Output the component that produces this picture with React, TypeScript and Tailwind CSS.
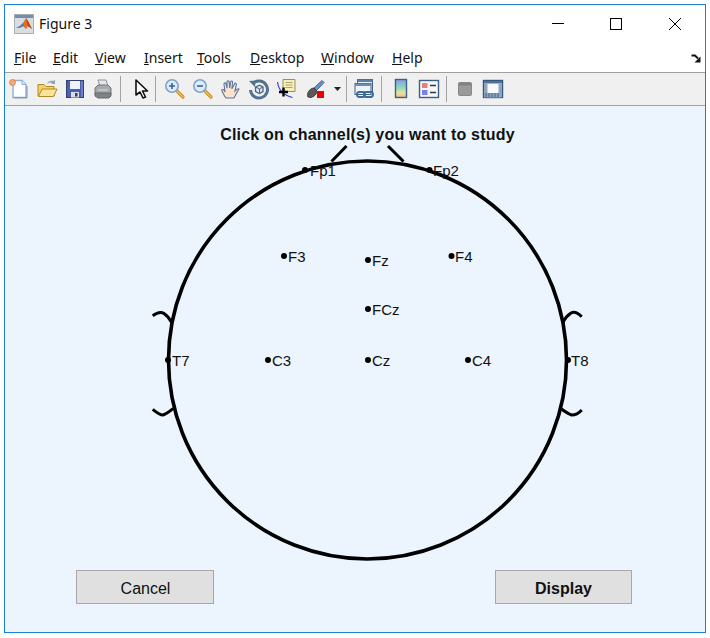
import React from "react";

const Ic = ({ children }: { children: React.ReactNode }) => (
  <div className="flex h-[24px] w-[28px] items-center justify-center">
    <svg width="22" height="22" viewBox="0 0 22 22">{children}</svg>
  </div>
);

const Sep = ({ className }: { className: string }) => (
  <div className={`h-[26px] w-[2px] border-l border-[#a3a3a3] ${className}`} />
);

const menus: [string, string, string][] = [
  ["F", "ile", "w-[39px]"],
  ["E", "dit", "w-[42px]"],
  ["V", "iew", "w-[49px]"],
  ["I", "nsert", "w-[53px]"],
  ["T", "ools", "w-[53px]"],
  ["D", "esktop", "w-[71px]"],
  ["W", "indow", "w-[71px]"],
  ["H", "elp", "w-[40px]"],
];

const sites: [string, number, number, number][] = [
  ["Fp1", 305, 170, 310],
  ["Fp2", 429.5, 170, 433],
  ["F3", 284, 256, 288],
  ["Fz", 368, 260, 372],
  ["F4", 451.5, 256, 455],
  ["FCz", 368, 309, 372],
  ["T7", 168, 360, 172],
  ["C3", 268, 360, 272],
  ["Cz", 368, 360, 372],
  ["C4", 468, 360, 472],
  ["T8", 568, 360, 571],
];

export default function App() {
  return (
    <div className="h-[638px] w-[710px] overflow-hidden bg-white pb-[5px] pl-[4px] pr-[4px] pt-[4px]">
      <div className="flex h-full w-full flex-col border border-[#1b80d4] font-['Noto_Sans','Open_Sans',sans-serif] text-black">
        {/* title bar */}
        <div className="flex h-[37px] shrink-0 items-center bg-white pl-[9px]">
          <svg width="20" height="20" viewBox="0 0 20 20">
            <rect x="0.5" y="0.5" width="19" height="19" fill="#d9dde2" stroke="#aab0b6" />
            <rect x="1" y="1" width="18" height="3" fill="#6f8faf" />
            <path d="M2 14l4-2 3-3 3-5 2 3 4 8-4-3-2 3-3-3-3 2z" fill="#e07020" />
            <path d="M2 14l4-2 3-3 1 3-3 1z" fill="#3f7fb8" />
            <path d="M12 4l2 3 4 8-4-3z" fill="#c33c14" />
          </svg>
          <span className="ml-[5px] pt-[1px] text-[14px] leading-none text-[#111]">Figure 3</span>
          <div className="ml-auto flex items-center">
            <svg width="130" height="14" viewBox="0 0 130 14" className="mr-[23px]">
              <path d="M0 6.5h12" stroke="#000" fill="none" />
              <rect x="58.5" y="1.5" width="11" height="11" stroke="#000" fill="none" />
              <path d="M117 1l12 12M129 1l-12 12" stroke="#000" fill="none" />
            </svg>
          </div>
        </div>

        {/* menu bar */}
        <div className="relative flex h-[31px] shrink-0 items-center border-b border-[#a0a0a0] bg-white pl-[9px] pt-[2px] text-[14px] text-[#111]">
          {menus.map(([u, rest, w]) => (
            <span key={u} className={`${w} leading-none`}>
              <span className="underline">{u}</span>
              {rest}
            </span>
          ))}
          <svg width="10" height="9" viewBox="0 0 10 9" className="absolute right-[4px] top-[12px]">
            <path d="M0.500 1.500h3.500l3 3" stroke="#111" strokeWidth="2" fill="none" />
            <path d="M9.500 2.500v6h-6z" fill="#111" />
          </svg>
        </div>

        {/* toolbar */}
        <div className="flex h-[33px] shrink-0 items-center border-b border-[#a0a0a0] bg-[#f0f0f0]">
          <Ic>
            <path d="M5 2.5h9l4 4v13H5z" fill="#fdfeff" stroke="#8fb0d4" strokeWidth="1.4" />
            <path d="M14 2.5v4h4" fill="#d8e6f4" stroke="#8fb0d4" />
            <path d="M6 19.8h13V8" stroke="#7d8fa5" fill="none" />
            <circle cx="4.5" cy="4.5" r="3" fill="#f4a97a" stroke="#e8743a" strokeWidth="0.8" />
          </Ic>
          <Ic>
            <path d="M2 18V6.5h6l2 2h8V18z" fill="#f3d36b" stroke="#b08a2a" />
            <path d="M2.5 18.5 6 11h15l-3.5 7.5z" fill="#fbe595" stroke="#b08a2a" />
            <path d="M11 6c1-3 4-4 6-3l2-1v4h-4l1-1c-2-1-3 0-5 1z" fill="#8ea3b8" />
          </Ic>
          <Ic>
            <rect x="2.5" y="2.5" width="17" height="17" fill="#4a5fb0" stroke="#33416f" />
            <rect x="6" y="3" width="10" height="8" fill="#eef3fb" />
            <rect x="7" y="14" width="8" height="5.5" fill="#d7dce6" />
            <rect x="11" y="15" width="2.5" height="3.5" fill="#333d5e" />
            <path d="M18 3v16" stroke="#8d9ed8" />
          </Ic>
          <Ic>
            <path d="M6 2h8l2 6H8z" fill="#e3e6ea" stroke="#8e9498" />
            <path d="M3 10l3-3h10l3 3v6H3z" fill="#a5a9ab" stroke="#74787a" />
            <path d="M3 15h16v3l-2 2H6l-3-2z" fill="#7f8385" stroke="#65696b" />
            <path d="M6 12h10" stroke="#d8dbdc" />
          </Ic>
          <Sep className="ml-[3px] mr-[7px]" />
          <div className="flex h-[24px] w-[24px] items-center justify-center">
            <svg width="20" height="22" viewBox="0 0 20 22">
              <path d="M5 2v15l4-3 3 6 2.5-1-3-6h5z" fill="#fff" stroke="#111" strokeWidth="1.6" strokeLinejoin="round" />
            </svg>
          </div>
          <Sep className="ml-[2px] mr-[4px]" />
          <Ic>
            <path d="M12.5 12.5 19 19" stroke="#c98a2b" strokeWidth="3.2" strokeLinecap="round" />
            <path d="M13 13l6 6" stroke="#f4c15f" strokeWidth="1.2" strokeLinecap="round" />
            <circle cx="8" cy="8" r="6.2" fill="#dcecf8" stroke="#7fa4c8" strokeWidth="1.6" />
            <path d="M5 8h6M8 5v6" stroke="#3b5f96" strokeWidth="1.6" />
          </Ic>
          <Ic>
            <path d="M12.5 12.5 19 19" stroke="#c98a2b" strokeWidth="3.2" strokeLinecap="round" />
            <path d="M13 13l6 6" stroke="#f4c15f" strokeWidth="1.2" strokeLinecap="round" />
            <circle cx="8" cy="8" r="6.2" fill="#dcecf8" stroke="#7fa4c8" strokeWidth="1.6" />
            <path d="M5 8h6" stroke="#3b5f96" strokeWidth="1.6" />
          </Ic>
          <Ic>
            <path
              d="M6 20c-2-2-2-3-4-7-.7-1.6 1-2 2-1l1 2-1-8c0-1.5 2-1.5 2 0l1 4V4c0-1.5 2.2-1.5 2.2 0l.4 6 1-6c.3-1.5 2.2-1.2 2 .3l-.8 6.5L14.500 6c.4-1.400 2.200-1 1.900.5L15 13c1-1 2.500-3 4-2 0 1-3 4-4 7l-1 2z"
              fill="#fbe3cb"
              stroke="#5b77a3"
              strokeWidth="1.1"
            />
          </Ic>
          <Ic>
            <path d="M5 5.500A8.500 8.500 0 1 1 2.500 12" fill="none" stroke="#54718f" strokeWidth="3" />
            <path d="M1 3 7.500 2.500 7 9z" fill="#54718f" />
            <path d="M7.500 9l4-1.800 3.500 1.800v4.500l-3.500 2-4-2z" fill="#d9e3ec" stroke="#4d6985" strokeWidth="1.300" />
            <path d="M7.500 9l4 1.800 3.500-1.800M11.500 10.800v5" fill="none" stroke="#4d6985" />
          </Ic>
          <Ic>
            <path d="M7 1.500h12v12H7z" fill="#f7efb8" stroke="#98925a" />
            <path d="M9.500 4.500h7M9.500 7h7M9.500 9.500h7" stroke="#a8a47a" />
            <path d="M1.500 4c1 8 5 13 15 15.500" fill="none" stroke="#2b35e0" strokeWidth="1.1" />
            <path d="M7.500 9.500v9M3 14h9" stroke="#000" strokeWidth="2.4" />
          </Ic>
          <Ic>
            <path d="M10 10 18 2.500l2 2-7.500 8z" fill="#6d8fcb" stroke="#46628f" />
            <path d="M4 19c-1.500-3 1-8.500 6-9l3 3c-.5 4.500-5 7.500-9 6z" fill="#5a5a5a" stroke="#3a3a3a" />
            <rect x="13" y="13" width="7" height="7" fill="#f00000" />
          </Ic>
          <div className="flex h-[24px] w-[16px] items-center justify-center">
            <svg width="7" height="4" viewBox="0 0 7 4">
              <path d="M0 0h7L3.500 4z" fill="#222" />
            </svg>
          </div>
          <Sep className="ml-[1px] mr-[3px]" />
          <Ic>
            <rect x="3.500" y="1.500" width="15" height="12" fill="#e8eef5" stroke="#3f5f85" />
            <rect x="3.500" y="1.500" width="15" height="2.500" fill="#5e7fa6" />
            <rect x="1" y="5.500" width="16" height="11" fill="#eef3f8" stroke="#3f5f85" />
            <path d="M1 5.500h16v2.500H1z" fill="#6d8eb5" />
            <rect x="3" y="14" width="8" height="5" rx="2.400" fill="none" stroke="#3f6a96" strokeWidth="1.900" />
            <rect x="10" y="14" width="9" height="5" rx="2.400" fill="none" stroke="#3f6a96" strokeWidth="1.900" />
          </Ic>
          <Sep className="ml-[2px] mr-[4px]" />
          <Ic>
            <defs>
              <linearGradient id="cb" x1="0" y1="0" x2="0" y2="1">
                <stop offset="0" stopColor="#8d9ae0" />
                <stop offset="0.45" stopColor="#8fd8c0" />
                <stop offset="0.75" stopColor="#e8e49a" />
                <stop offset="1" stopColor="#f4b48a" />
              </linearGradient>
            </defs>
            <rect x="5.500" y="1.500" width="11" height="18" fill="url(#cb)" stroke="#3f5f85" strokeWidth="1.400" />
          </Ic>
          <Ic>
            <rect x="1.500" y="2.500" width="19" height="17" fill="#f6f8fb" stroke="#3f5f85" strokeWidth="1.400" />
            <rect x="4" y="5" width="5.500" height="5" fill="#ec7d7d" />
            <rect x="4" y="12" width="5.500" height="5" fill="#7c80ec" />
            <path d="M12 7.500h6M12 14.500h6" stroke="#333" strokeWidth="1.500" />
          </Ic>
          <Sep className="ml-[3px] mr-[3px]" />
          <Ic>
            <rect x="4.500" y="4.500" width="13" height="13" rx="1" fill="#9a9a9a" stroke="#888" />
            <path d="M5 5h12v2.500H5z" fill="#828282" />
          </Ic>
          <Ic>
            <rect x="1.500" y="2.500" width="19" height="17" fill="#f8fafd" stroke="#34557c" strokeWidth="1.400" />
            <path d="M2 3h18v2.500H2z" fill="#4f7098" />
            <path d="M2 5.500h3.500V15H2zM16.500 5.500H20V15h-3.500z" fill="#8ea5bf" />
            <path d="M2 15h18v4.500H2z" fill="#8ea5bf" />
            <path d="M4 15v4M7 15v4M10 15v4M13 15v4M16 15v4" stroke="#34557c" strokeWidth="0.800" />
          </Ic>
        </div>

        {/* figure canvas */}
        <div className="relative flex flex-1 flex-col bg-[#ecf4fe] font-['Liberation_Sans',Arial,sans-serif]">
          <svg width="700" height="526" viewBox="5 106 700 526" className="absolute left-0 top-0">
            <circle cx="367.500" cy="360" r="199" fill="none" stroke="#000" strokeWidth="3.600" />
            <path
              d="M346.500 146 331.500 161.500M388 146 403.500 161.500M152.700 315.700C157 312.500 161 311.500 164 313.500 167 315.500 170 319 171.700 322.700M152.700 409.300C156 412 160 415 163 415 166 414 170 411 173.300 408.300M581.700 316.700C578 313 574 311.500 571 313 568 315 564.500 319 562.700 322.700M560.500 408.300C564 411 568 414 571.700 415 575 415 579 413 581.700 410"
              fill="none"
              stroke="#000"
              strokeWidth="3"
            />
            {sites.map(([n, x, y]) => (
              <circle key={n} cx={x} cy={y} r="3" fill="#000" />
            ))}
          </svg>
          {sites.map(([n, x, y, lx]) => (
            <span
              key={n}
              className="absolute text-[15px] leading-[17px] text-[#111]"
              style={{ left: lx - 5, top: y - 8 - 106 }}
            >
              {n}
            </span>
          ))}
          <div className="relative pl-[25px] pt-[20px] text-center text-[16px] font-bold leading-[17px] tracking-[0.2px] text-[#111]">
            Click on channel(s) you want to study
          </div>
          <div className="relative mt-auto flex justify-between pb-[28px] pl-[71px] pr-[73px]">
            <button className="h-[34px] w-[138px] border border-[#aba7a4] bg-[#e0e0e0] pl-[1px] pt-[3px] text-[16px] leading-none text-[#111]">
              Cancel
            </button>
            <button className="h-[34px] w-[137px] border border-[#aba7a4] bg-[#e0e0e0] pt-[3px] text-[16px] font-bold leading-none text-[#111]">
              Display
            </button>
          </div>
        </div>
      </div>
    </div>
  );
}
